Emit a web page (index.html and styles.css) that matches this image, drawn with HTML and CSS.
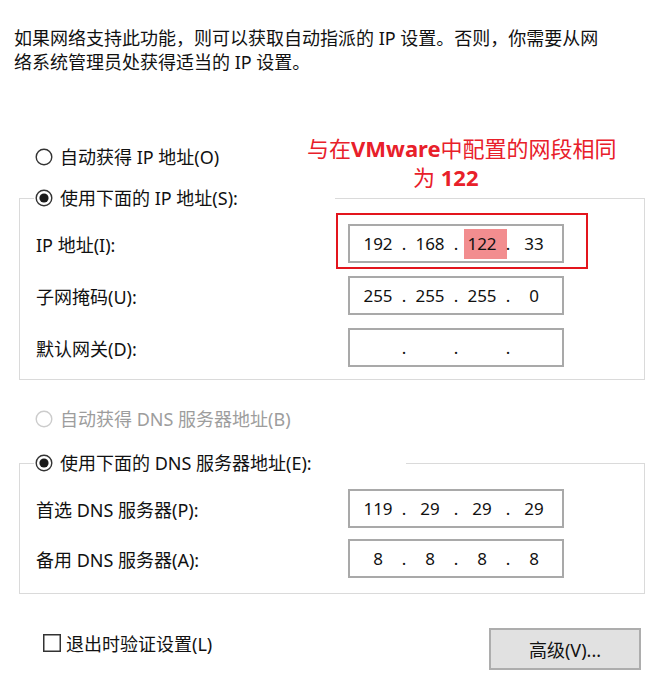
FILE: index.html
```html
<!DOCTYPE html>
<html lang="zh-CN">
<head>
<meta charset="utf-8">
<title>IP 设置</title>
<link rel="stylesheet" href="styles.css">
</head>
<body>
<div class="page">
  <p class="intro">如果网络支持此功能，则可以获取自动指派的 IP 设置。否则，你需要从网<br>络系统管理员处获得适当的 IP 设置。</p>

  <div class="radio radio-first">
    <svg class="radio-icon" viewBox="0 0 18 18" width="18" height="18"><circle cx="9" cy="9" r="7.8" fill="#fff" stroke="#333" stroke-width="1.4"/></svg>
    <span>自动获得 IP 地址(O)</span>
  </div>

  <fieldset class="group group-ip">
    <legend class="legend legend-ip">
      <span class="radio">
        <svg class="radio-icon" viewBox="0 0 18 18" width="18" height="18"><circle cx="9" cy="9" r="7.8" fill="#fff" stroke="#333" stroke-width="1.4"/><circle cx="9" cy="9" r="4.6" fill="#1a1a1a"/></svg>
        <span>使用下面的 IP 地址(S):</span>
      </span>
    </legend>
    <div class="rows rows-ip">
      <div class="row">
        <span class="label">IP 地址(I):</span>
        <div class="ip"><span class="f">192</span><span class="d">.</span><span class="f">168</span><span class="d">.</span><span class="f"><span class="sel">122</span></span><span class="d">.</span><span class="f">33</span></div>
      </div>
      <div class="row">
        <span class="label">子网掩码(U):</span>
        <div class="ip"><span class="f">255</span><span class="d">.</span><span class="f">255</span><span class="d">.</span><span class="f">255</span><span class="d">.</span><span class="f">0</span></div>
      </div>
      <div class="row">
        <span class="label">默认网关(D):</span>
        <div class="ip"><span class="f"></span><span class="d">.</span><span class="f"></span><span class="d">.</span><span class="f"></span><span class="d">.</span><span class="f"></span></div>
      </div>
    </div>
  </fieldset>

  <div class="radio radio-disabled">
    <svg class="radio-icon" viewBox="0 0 18 18" width="18" height="18"><circle cx="9" cy="9" r="7.8" fill="#fff" stroke="#cccccc" stroke-width="1.4"/></svg>
    <span>自动获得 DNS 服务器地址(B)</span>
  </div>

  <fieldset class="group group-dns">
    <legend class="legend legend-dns">
      <span class="radio">
        <svg class="radio-icon" viewBox="0 0 18 18" width="18" height="18"><circle cx="9" cy="9" r="7.8" fill="#fff" stroke="#333" stroke-width="1.4"/><circle cx="9" cy="9" r="4.6" fill="#1a1a1a"/></svg>
        <span>使用下面的 DNS 服务器地址(E):</span>
      </span>
    </legend>
    <div class="rows rows-dns">
      <div class="row">
        <span class="label">首选 DNS 服务器(P):</span>
        <div class="ip"><span class="f">119</span><span class="d">.</span><span class="f">29</span><span class="d">.</span><span class="f">29</span><span class="d">.</span><span class="f">29</span></div>
      </div>
      <div class="row">
        <span class="label">备用 DNS 服务器(A):</span>
        <div class="ip"><span class="f">8</span><span class="d">.</span><span class="f">8</span><span class="d">.</span><span class="f">8</span><span class="d">.</span><span class="f">8</span></div>
      </div>
    </div>
  </fieldset>

  <div class="bottom">
    <div class="check">
      <svg class="check-icon" viewBox="0 0 18 18" width="18" height="18"><rect x="0.75" y="0.75" width="16.5" height="16.5" fill="#fff" stroke="#333" stroke-width="1.5"/></svg>
      <span>退出时验证设置(L)</span>
    </div>
    <div class="button">高级(V)...</div>
  </div>

  <div class="note">与在<b>VMware</b>中配置的网段相同<br><span class="note-l2">为 <b>122</b></span></div>
  <div class="mark"></div>
</div>
</body>
</html>
```

FILE: styles.css
```css
html, body {
  margin: 0;
  padding: 0;
  background: #fff;
}

body {
  font-family: "Noto Sans", "Noto Sans CJK SC", sans-serif;
  font-size: 18px;
  color: #111;
}

.page {
  position: relative;
  width: 661px;
  height: 694px;
  padding-top: 26px;
  box-sizing: border-box;
}

.intro {
  margin: 0 0 0 14px;
  line-height: 24px;
  white-space: nowrap;
}

.radio {
  display: flex;
  align-items: center;
  gap: 7px;
  height: 24px;
  line-height: 24px;
  white-space: nowrap;
}

.radio-icon {
  flex: none;
  display: block;
}

.radio-first {
  margin: 71px 0 0 35px;
}

.radio-disabled {
  margin: 27px 0 0 35px;
  color: #9d9d9d;
}

.group {
  margin: 17px 0 0 19px;
  width: 626px;
  box-sizing: border-box;
  border: 1px solid #dadada;
  padding: 14px 0 12px 14px;
  min-inline-size: 0;
}

.group-dns {
  margin-top: 20px;
  padding-bottom: 15px;
}

.legend {
  padding: 0;
  height: 24px;
  background: #fff;
}

.legend-ip {
  width: 301px;
}

.legend-dns {
  width: 372px;
}

.legend .radio {
  margin-left: 1px;
}

.rows {
  display: flex;
  flex-direction: column;
}

.rows-ip {
  gap: 13px;
}

.rows-dns {
  gap: 11px;
}

.row {
  display: flex;
  align-items: center;
  height: 39px;
}

.label {
  width: 314px;
  padding-left: 2px;
  box-sizing: border-box;
  white-space: nowrap;
}

.ip {
  display: flex;
  align-items: center;
  width: 216px;
  height: 39px;
  box-sizing: border-box;
  border: 2px solid #a9a9a9;
  padding: 0 8px;
  font-size: 17px;
}

.f {
  width: 40px;
  text-align: center;
}

.d {
  width: 12px;
  text-align: center;
}

.sel {
  display: inline-block;
  background: #f28d8f;
  line-height: 30px;
  padding: 0 10px 0 3px;
  margin: 0 -10px 0 -3px;
}

.bottom {
  display: flex;
  justify-content: space-between;
  align-items: flex-start;
  margin-top: 34px;
  padding: 0 20px 0 43px;
}

.check {
  display: flex;
  align-items: center;
  gap: 5px;
  height: 24px;
  margin-top: 3px;
  white-space: nowrap;
}

.check-icon {
  display: block;
  flex: none;
}

.button {
  width: 152px;
  height: 42px;
  box-sizing: border-box;
  border: 2px solid #adadad;
  background: #e1e1e1;
  display: flex;
  align-items: center;
  justify-content: center;
}

.note {
  position: absolute;
  left: 307px;
  top: 134px;
  font-size: 22px;
  line-height: 29px;
  color: #e8202a;
  white-space: nowrap;
}

.note b {
  font-weight: 700;
}

.note-l2 {
  margin-left: 106px;
}

.mark {
  position: absolute;
  left: 336px;
  top: 213px;
  width: 252px;
  height: 56px;
  box-sizing: border-box;
  border: 2px solid #e3151d;
}
```
